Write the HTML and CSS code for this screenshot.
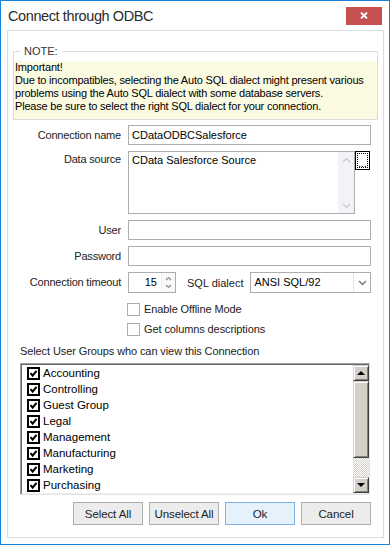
FILE: index.html
```html
<!DOCTYPE html>
<html lang="en">
<head>
  <meta charset="UTF-8">
  <title>Connect through ODBC</title>
  <link rel="stylesheet" href="styles.css">
</head>
<body>
  <div class="window">
    <div class="titlebar">
      <span class="title">Connect through ODBC</span>
      <button class="close">
        <svg width="8" height="7" viewBox="0 0 8 7"><path d="M1 0.5L7 6.5M7 0.5L1 6.5" stroke="#fff" stroke-width="1.8"/></svg>
      </button>
    </div>

    <div class="panel">
      <fieldset class="note">
        <legend>NOTE:</legend>
        <div class="note-text">Important!<br>Due to incompatibles, selecting the Auto SQL dialect might present various<br>problems using the Auto SQL dialect with some database servers.<br>Please be sure to select the right SQL dialect for your connection.</div>
      </fieldset>

      <div class="form">
        <label class="lbl">Connection name</label>
        <input class="input" type="text" value="CDataODBCSalesforce">

        <label class="lbl lbl-top">Data source</label>
        <div class="ds">
          <div class="memo">
            <div class="memo-text">CData Salesforce Source</div>
            <div class="memo-scroll">
              <svg width="9" height="6" viewBox="0 0 9 6"><path d="M1 5L4.5 1.5L8 5" fill="none" stroke="#c9c6cc" stroke-width="1.2"/></svg>
              <svg width="9" height="6" viewBox="0 0 9 6"><path d="M1 1L4.5 4.5L8 1" fill="none" stroke="#c9c6cc" stroke-width="1.2"/></svg>
            </div>
          </div>
          <button class="browse"><span>...</span></button>
        </div>

        <label class="lbl">User</label>
        <input class="input" type="text" value="">

        <label class="lbl">Password</label>
        <input class="input" type="password" value="">

        <label class="lbl lbl-21">Connection timeout</label>
        <div class="timeout">
          <div class="spin">
            <span class="spin-value">15</span>
            <span class="spin-btns">
              <svg width="7" height="5" viewBox="0 0 7 5"><path d="M1 4L3.5 1.5L6 4" fill="none" stroke="#8a8a8a" stroke-width="1.1"/></svg>
              <svg width="7" height="5" viewBox="0 0 7 5"><path d="M1 1L3.5 3.5L6 1" fill="none" stroke="#8a8a8a" stroke-width="1.1"/></svg>
            </span>
          </div>
          <span class="dialect-lbl">SQL dialect</span>
          <div class="select">
            <span class="select-value">ANSI SQL/92</span>
            <span class="select-btn">
              <svg width="9" height="6" viewBox="0 0 9 6"><path d="M1 1L4.5 4.5L8 1" fill="none" stroke="#707070" stroke-width="1.3"/></svg>
            </span>
          </div>
        </div>

        <div class="checks">
          <label class="check"><span class="box"></span>Enable Offline Mode</label>
          <label class="check"><span class="box"></span>Get columns descriptions</label>
        </div>
      </div>

      <div class="groups-lbl">Select User Groups who can view this Connection</div>

      <div class="list">
        <div class="list-inner">
          <ul class="items">
            <li><svg class="cb" width="13" height="13" viewBox="0 0 13 13"><rect x="1" y="1" width="11" height="11" fill="#fff" stroke="#000" stroke-width="2"/><path d="M3.5 6.2L5.6 8.6L9.6 3.8" fill="none" stroke="#000" stroke-width="2"/></svg>Accounting</li>
            <li><svg class="cb" width="13" height="13" viewBox="0 0 13 13"><rect x="1" y="1" width="11" height="11" fill="#fff" stroke="#000" stroke-width="2"/><path d="M3.5 6.2L5.6 8.6L9.6 3.8" fill="none" stroke="#000" stroke-width="2"/></svg>Controlling</li>
            <li><svg class="cb" width="13" height="13" viewBox="0 0 13 13"><rect x="1" y="1" width="11" height="11" fill="#fff" stroke="#000" stroke-width="2"/><path d="M3.5 6.2L5.6 8.6L9.6 3.8" fill="none" stroke="#000" stroke-width="2"/></svg>Guest Group</li>
            <li><svg class="cb" width="13" height="13" viewBox="0 0 13 13"><rect x="1" y="1" width="11" height="11" fill="#fff" stroke="#000" stroke-width="2"/><path d="M3.5 6.2L5.6 8.6L9.6 3.8" fill="none" stroke="#000" stroke-width="2"/></svg>Legal</li>
            <li><svg class="cb" width="13" height="13" viewBox="0 0 13 13"><rect x="1" y="1" width="11" height="11" fill="#fff" stroke="#000" stroke-width="2"/><path d="M3.5 6.2L5.6 8.6L9.6 3.8" fill="none" stroke="#000" stroke-width="2"/></svg>Management</li>
            <li><svg class="cb" width="13" height="13" viewBox="0 0 13 13"><rect x="1" y="1" width="11" height="11" fill="#fff" stroke="#000" stroke-width="2"/><path d="M3.5 6.2L5.6 8.6L9.6 3.8" fill="none" stroke="#000" stroke-width="2"/></svg>Manufacturing</li>
            <li><svg class="cb" width="13" height="13" viewBox="0 0 13 13"><rect x="1" y="1" width="11" height="11" fill="#fff" stroke="#000" stroke-width="2"/><path d="M3.5 6.2L5.6 8.6L9.6 3.8" fill="none" stroke="#000" stroke-width="2"/></svg>Marketing</li>
            <li><svg class="cb" width="13" height="13" viewBox="0 0 13 13"><rect x="1" y="1" width="11" height="11" fill="#fff" stroke="#000" stroke-width="2"/><path d="M3.5 6.2L5.6 8.6L9.6 3.8" fill="none" stroke="#000" stroke-width="2"/></svg>Purchasing</li>
          </ul>
          <div class="vscroll">
            <div class="sb-btn"><span class="arrow-up"></span></div>
            <div class="sb-thumb"></div>
            <div class="sb-track"></div>
            <div class="sb-btn"><span class="arrow-down"></span></div>
          </div>
        </div>
      </div>

      <div class="buttons">
        <button class="btn">Select All</button>
        <button class="btn">Unselect All</button>
        <button class="btn btn-default">Ok</button>
        <button class="btn">Cancel</button>
      </div>
    </div>
  </div>
</body>
</html>
```

FILE: styles.css
```css
* {
  margin: 0;
  padding: 0;
  box-sizing: border-box;
}

body {
  width: 390px;
  height: 545px;
  overflow: hidden;
  background: #fff;
  font: 11px "Liberation Sans", Arial, sans-serif;
  color: #000;
}

button,
input {
  font: inherit;
  color: inherit;
}

.window {
  width: 390px;
  height: 545px;
  border: 1px solid #1883d7;
  display: flex;
  flex-direction: column;
}

/* title bar */
.titlebar {
  height: 29px;
  flex: none;
  display: flex;
  align-items: center;
  justify-content: space-between;
  padding-left: 7px;
}

.title {
  font-size: 14.5px;
  letter-spacing: -0.4px;
  color: #2b2b2b;
}

.close {
  width: 36px;
  height: 18px;
  margin-right: 7px;
  border: none;
  background: #c75050;
  display: flex;
  align-items: center;
  justify-content: center;
}

/* main panel */
.panel {
  flex: 1;
  margin: 0 5px 6px 6px;
  border: 1px solid #dcdcdc;
}

.note {
  margin: 14px 5px 0 5px;
  border: 1px solid #dcdcdc;
  padding: 4px 0 0 0;
}

.note legend {
  margin-left: 6px;
  padding: 0 4px;
  line-height: 12px;
  color: #333;
}

.note-text {
  background: #fbfbe2;
  padding: 0 0 6px 1px;
  line-height: 13px;
  letter-spacing: -0.2px;
}

/* form */
.form {
  margin-top: 5px;
  padding-right: 12px;
  display: grid;
  grid-template-columns: 113px 1fr;
  column-gap: 7px;
  row-gap: 6px;
}

.lbl {
  text-align: right;
  line-height: 20px;
  color: #222;
  letter-spacing: -0.2px;
}

.lbl-top {
  line-height: 16px;
}

.lbl-21 {
  line-height: 21px;
}

.input {
  height: 20px;
  border: 1px solid #adadad;
  padding: 0 3px;
  outline: none;
  background: #fff;
}

.ds {
  display: flex;
  align-items: flex-start;
}

.memo {
  width: 227px;
  height: 63px;
  border: 1px solid #adadad;
  display: flex;
}

.memo-text {
  flex: 1;
  padding: 2px 3px;
  line-height: 13px;
}

.memo-scroll {
  width: 16px;
  background: #f5f2f7;
  display: flex;
  flex-direction: column;
  justify-content: space-between;
  align-items: center;
  padding: 5px 0 4px;
}

.browse {
  width: 15px;
  height: 19px;
  border: 1px solid #000;
  background: #fff;
  padding: 1px;
}

.browse span {
  display: block;
  height: 100%;
  border: 1px dotted #000;
  line-height: 20px;
  overflow: hidden;
  text-align: center;
  font-size: 10px;
}

.timeout {
  display: flex;
  align-items: center;
  height: 21px;
}

.spin {
  width: 48px;
  height: 21px;
  border: 1px solid #adadad;
  display: flex;
}

.spin-value {
  flex: 1;
  text-align: right;
  padding-right: 4px;
  line-height: 19px;
}

.spin-btns {
  width: 14px;
  display: flex;
  flex-direction: column;
  align-items: center;
  justify-content: space-around;
  padding: 2px 0;
  background: #f9f9f9;
  border-left: 1px solid #ececec;
}

.dialect-lbl {
  margin-left: 11px;
  color: #222;
}

.select {
  flex: 1;
  height: 21px;
  margin-left: 7px;
  border: 1px solid #adadad;
  display: flex;
}

.select-value {
  flex: 1;
  padding-left: 3px;
  line-height: 19px;
}

.select-btn {
  width: 17px;
  border-left: 1px solid #e3e3e3;
  display: flex;
  align-items: center;
  justify-content: center;
}

.checks {
  grid-column: 2;
  display: flex;
  flex-direction: column;
}

.check {
  height: 20px;
  display: flex;
  align-items: center;
  color: #222;
  letter-spacing: -0.1px;
}

.check .box {
  width: 13px;
  height: 13px;
  margin-left: -1px;
  margin-right: 4px;
  border: 1px solid #adadad;
  background: #fff;
}

/* user groups */
.groups-lbl {
  margin: 5px 0 0 12px;
  line-height: 14px;
  color: #222;
  letter-spacing: -0.1px;
}

.list {
  margin: 5px 13px 0 12px;
  border: 1px solid;
  border-color: #a0a0a0 #e3e3e3 #e3e3e3 #a0a0a0;
}

.list-inner {
  display: flex;
  border-top: 1px solid #696969;
  border-left: 1px solid #696969;
  border-bottom: 1px solid #f0f0f0;
}

.items {
  flex: 1;
  list-style: none;
}

.items li {
  height: 16px;
  display: flex;
  align-items: center;
  padding-left: 5px;
  font-size: 11.5px;
}

.items .cb {
  margin-right: 3px;
}

.vscroll {
  width: 16px;
  display: flex;
  flex-direction: column;
}

.sb-btn,
.sb-thumb {
  background: #d4d0c8;
  border: 1px solid;
  border-color: #d4d0c8 #404040 #404040 #d4d0c8;
  box-shadow: inset 1px 1px 0 #fff, inset -1px -1px 0 #808080;
}

.sb-btn {
  height: 16px;
  display: flex;
  align-items: center;
  justify-content: center;
}

.sb-thumb {
  height: 77px;
}

.sb-track {
  flex: 1;
  background-image: conic-gradient(#fff 25%, #d4d0c8 0 50%, #fff 0 75%, #d4d0c8 0);
  background-size: 2px 2px;
}

.arrow-up,
.arrow-down {
  width: 0;
  height: 0;
  border-left: 4px solid transparent;
  border-right: 4px solid transparent;
}

.arrow-up {
  border-bottom: 4px solid #000;
}

.arrow-down {
  border-top: 4px solid #000;
}

/* buttons */
.buttons {
  margin-top: 7px;
  padding-right: 12px;
  display: flex;
  justify-content: flex-end;
  gap: 6px;
}

.btn {
  width: 70px;
  height: 23px;
  border: 1px solid #adadad;
  background: #ececec;
  color: #222;
  letter-spacing: -0.1px;
  font-size: 11.5px;
}

.btn-default {
  border-color: #7eb4ea;
  background: #e5f1fb;
}
```
